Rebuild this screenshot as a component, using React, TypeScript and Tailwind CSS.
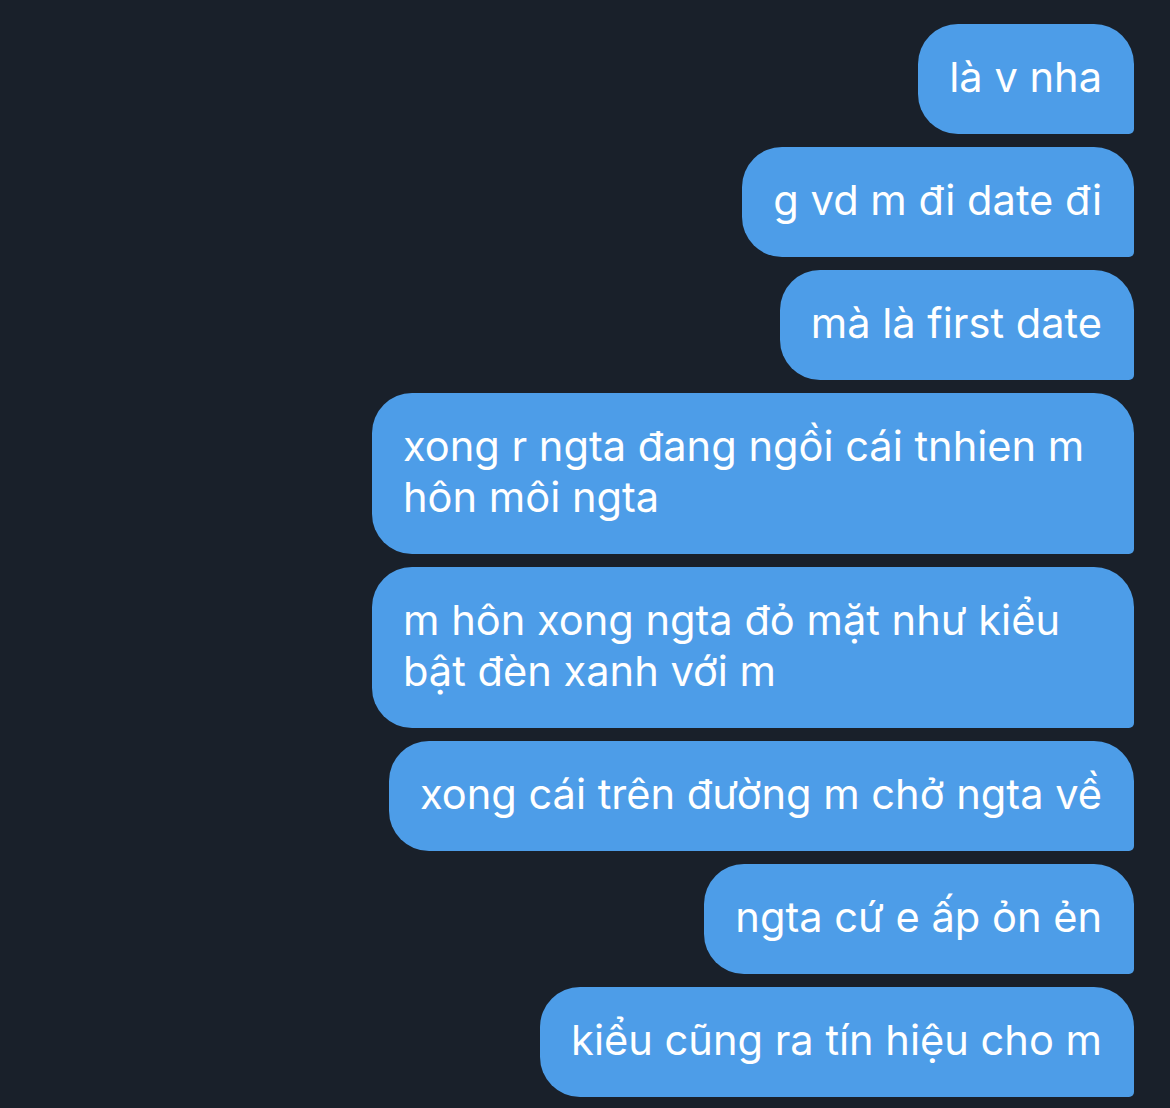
const messages = [
  "là v nha",
  "g vd m đi date đi",
  "mà là first date",
  "xong r ngta đang ngồi cái tnhien m hôn môi ngta",
  "m hôn xong ngta đỏ mặt như kiểu bật đèn xanh với m",
  "xong cái trên đường m chở ngta về",
  "ngta cứ e ấp ỏn ẻn",
  "kiểu cũng ra tín hiệu cho m",
];

export default function App() {
  return (
    <div className="min-h-[1108px] w-full bg-[#19202a] pt-[24px] pr-[36px] font-['Inter',sans-serif]">
      <div className="flex flex-col items-end gap-[13px]">
        {messages.map((m, i) => (
          <div
            key={i}
            className="max-w-[762px] rounded-[40px] rounded-br-[5px] bg-[#4d9de8] pl-[31px] pr-[32px] pt-[28px] pb-[31px] text-[41.6px] leading-[51px] text-white"
          >
            {m}
          </div>
        ))}
      </div>
    </div>
  );
}
